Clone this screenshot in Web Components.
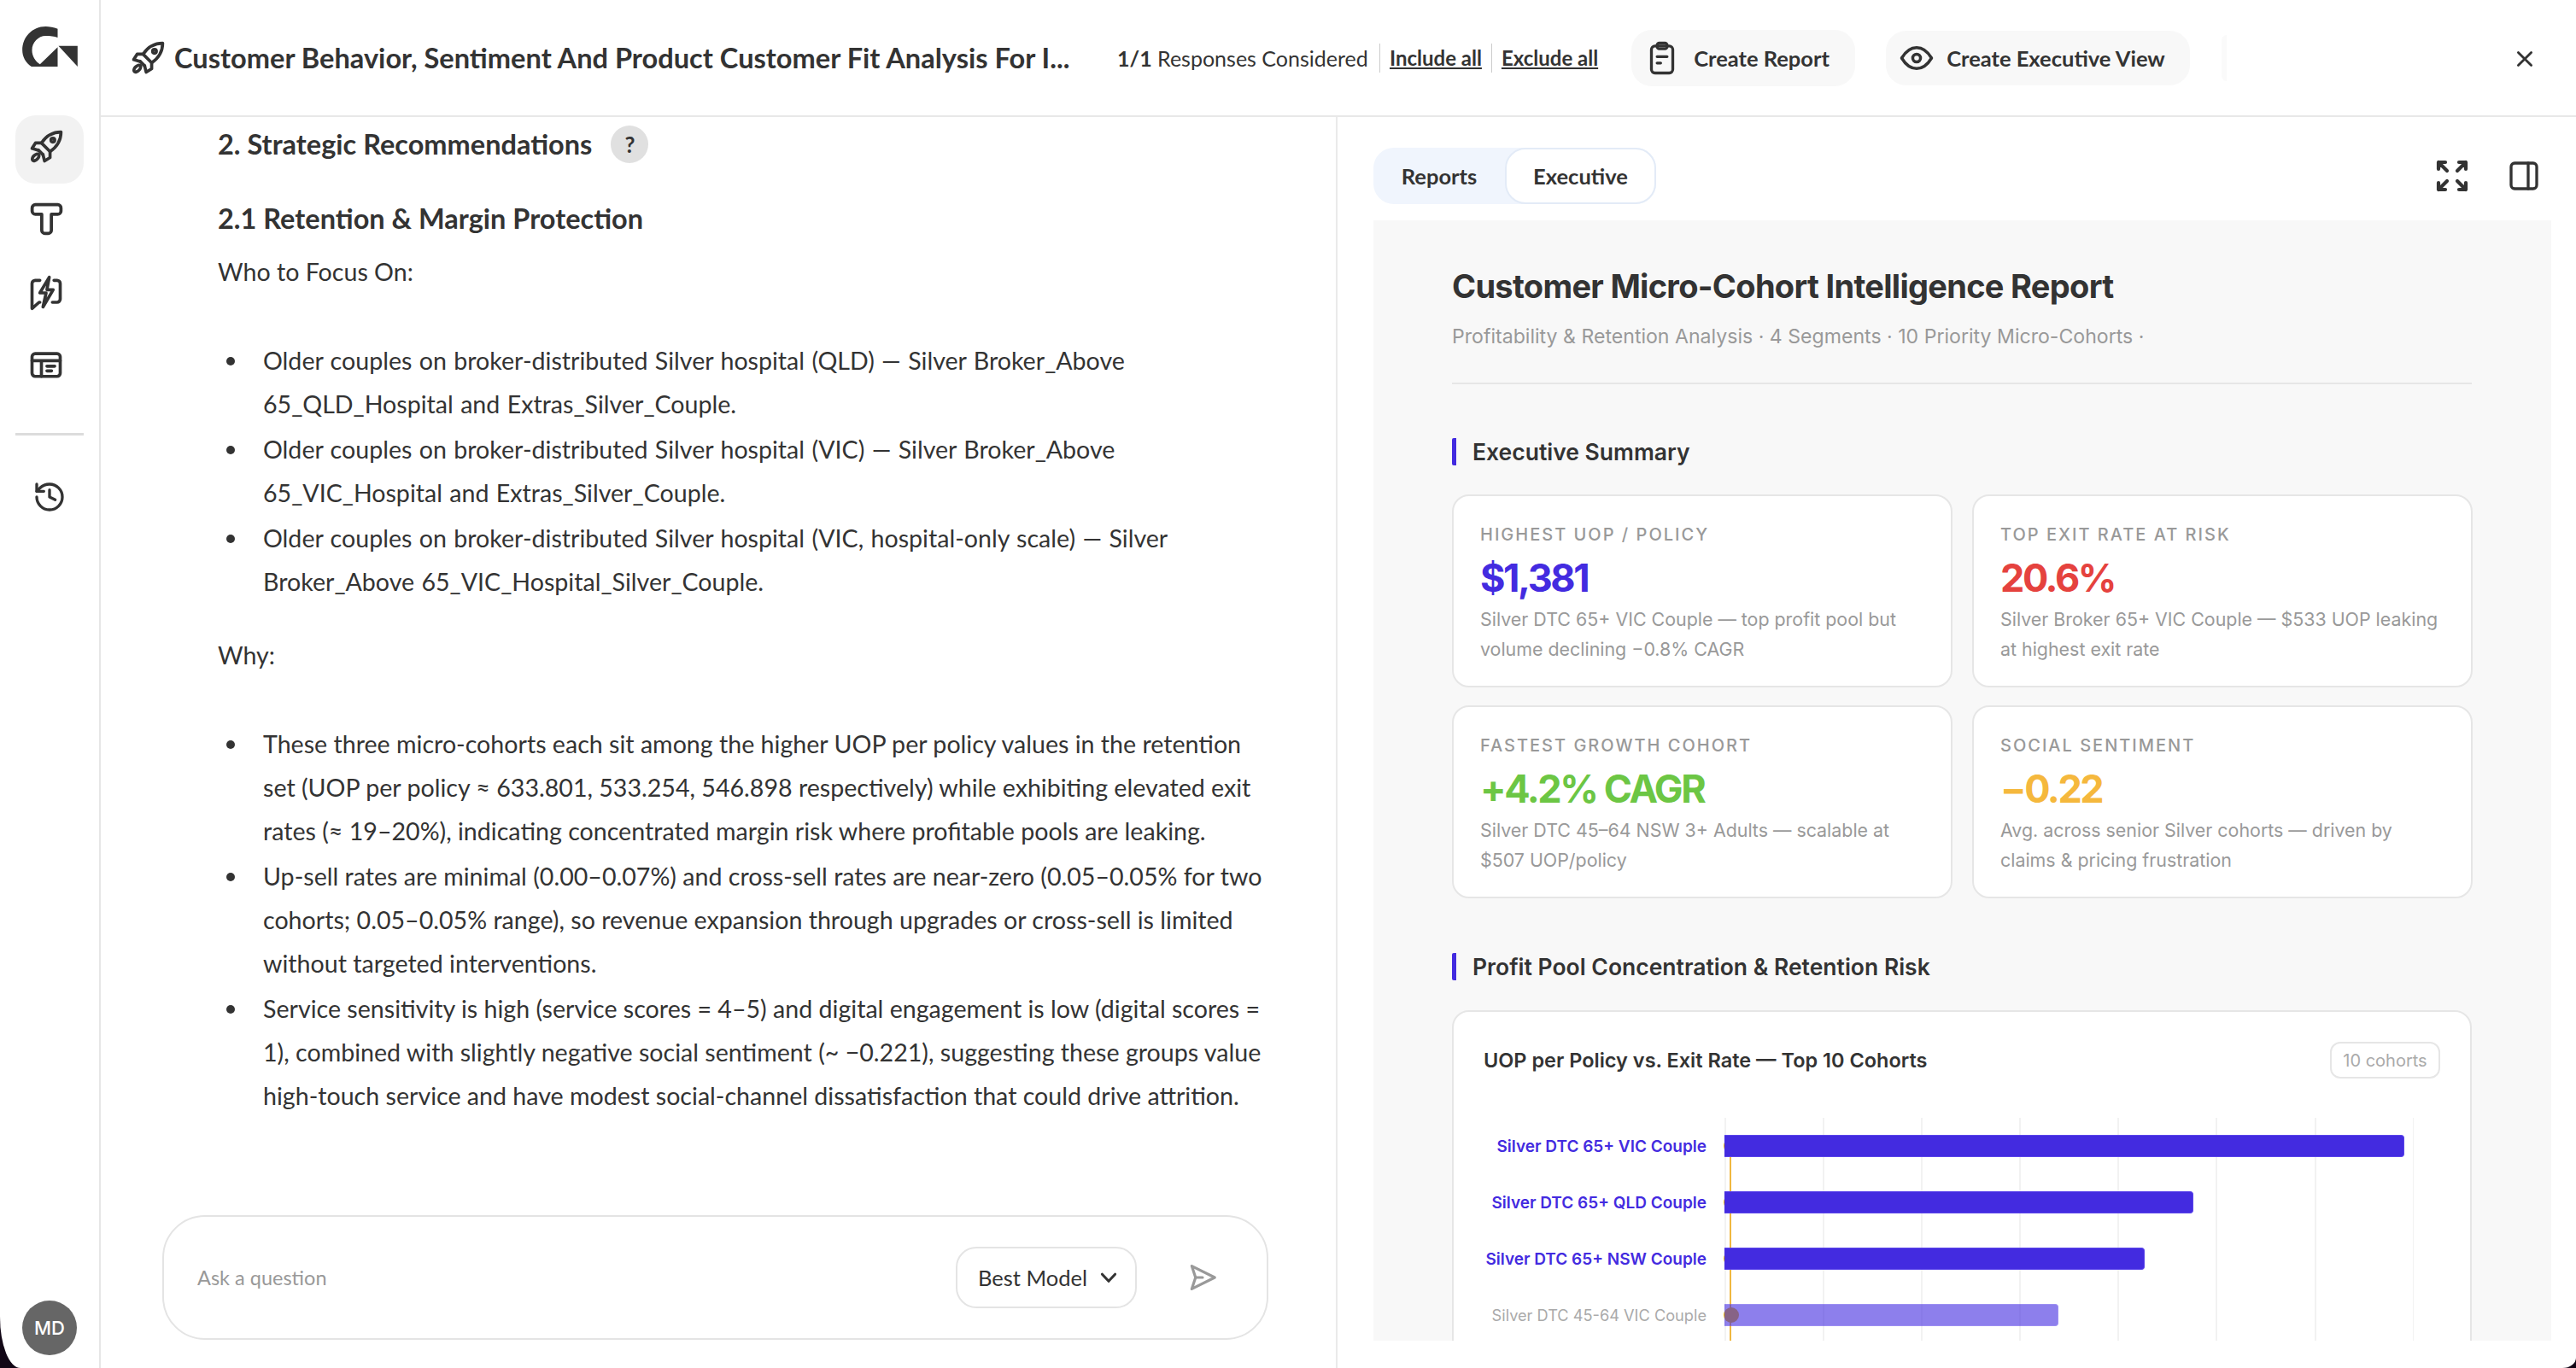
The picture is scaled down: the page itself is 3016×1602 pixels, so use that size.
<!DOCTYPE html>
<html>
<head>
<meta charset="utf-8">
<title>Customer Micro-Cohort Intelligence Report</title>
<style>
  html { background: #120716; }
  body { margin: 0; width: 3016px; height: 1602px; overflow: hidden; font-family: "Lato", "Liberation Sans", sans-serif; color: #333; }
</style>
</head>
<body>
<app-shell>
  <side-rail slot="rail"></side-rail>
  <top-bar slot="top" heading="Customer Behavior, Sentiment And Product Customer Fit Analysis For I..."></top-bar>
  <answer-pane slot="left"></answer-pane>
  <report-pane slot="right"></report-pane>
</app-shell>

<script>
const ICONS = {
  rocket: '<path d="M21.5 2.5C16 2.5 12 5 9 9.5l5.5 5.5c4.5-3 7-7 7-12.500z"/><path d="M9 9.500H5.200L3 13l4 1.200"/><path d="M14.500 15v3.800L11 21l-1-4"/><path d="M7 14l3 3"/><circle cx="16.300" cy="7.700" r="1.200"/><ellipse cx="5.300" cy="18.700" rx="2.700" ry="1.500" transform="rotate(-45 5.300 18.700)"/>',
  type: '<path d="M5 3h14a2 2 0 0 1 2 2v2a2 2 0 0 1-2 2h-4v10a2 2 0 0 1-2 2h-2a2 2 0 0 1-2-2V9H5a2 2 0 0 1-2-2V5a2 2 0 0 1 2-2z"/>',
  bolt: '<path d="M8 4H5a2 2 0 0 0-2 2v16l4.500-4H8"/><path d="M17 4h2a2 2 0 0 1 2 2v10a2 2 0 0 1-2 2h-3"/><path d="M14 2L8 12h4l-2 9 6.500-11H12.500z"/>',
  table: '<rect x="3" y="5" width="18" height="14.500" rx="2"/><path d="M3 9.500h18M9 9.500v10M12.500 13h5M12.500 16h3"/>',
  history: '<path d="M3 12a9 9 0 1 0 9-9 9.750 9.750 0 0 0-6.740 2.740L3 8"/><path d="M3 3v5h5"/><path d="M12 7v5l4 2"/>',
  clipboard: '<rect x="4.500" y="3.500" width="15" height="19" rx="2.500"/><rect x="8.500" y="1.500" width="7" height="4" rx="1.500"/><path d="M8.500 11h7M8.500 15.500h2.500"/>',
  eye: '<path d="M2 12C5 7 8 5 12 5s7 2 10 7c-3 5-6 7-10 7s-7-2-10-7z"/><circle cx="12" cy="12" r="2.600"/>',
  close: '<path d="M5 5l14 14M19 5L5 19"/>',
  expand: '<path d="M4 8V4h4M4 4l5 5M20 8V4h-4M20 4l-5 5M4 16v4h4M4 20l5-5M20 16v4h-4M20 20l-5-5"/>',
  panel: '<rect x="3" y="3" width="18" height="18" rx="2.500"/><path d="M15 3v18"/>',
  send: '<path d="M4 3.500L21 12 4 20.500 6.800 12z"/><path d="M6.800 12H12"/>',
  chevron: '<path d="M5 8.500l7 7.500 7-7.500"/>'
};

class UiIcon extends HTMLElement {
  connectedCallback() {
    const s = this.getAttribute('size') || 32;
    const w = this.getAttribute('stroke') || 2;
    this.attachShadow({ mode: 'open' }).innerHTML = `
      <style>:host { display: inline-flex; width: ${s}px; height: ${s}px; flex: none; } svg { width: 100%; height: 100%; }</style>
      <svg viewBox="0 0 24 24" fill="none" stroke="currentColor" stroke-width="${w}" stroke-linecap="round" stroke-linejoin="round">${ICONS[this.getAttribute('name')]}</svg>`;
  }
}
customElements.define('ui-icon', UiIcon);

class AppShell extends HTMLElement {
  constructor() {
    super();
    this.attachShadow({ mode: 'open' }).innerHTML = `
      <style>
        :host { display: grid; width: 3016px; height: 1602px; grid-template-columns: 118px 1448px 1450px; grid-template-rows: 137px 1465px;
          background: #fff; border-bottom-left-radius: 24px 60px; border-bottom-right-radius: 16px 12px; overflow: hidden; }
        ::slotted([slot=rail]) { grid-row: 1 / 3; }
        ::slotted([slot=top]) { grid-column: 2 / 4; }
      </style>
      <slot name="rail"></slot><slot name="top"></slot><slot name="left"></slot><slot name="right"></slot>`;
  }
}
customElements.define('app-shell', AppShell);

class SideRail extends HTMLElement {
  constructor() {
    super();
    this.attachShadow({ mode: 'open' }).innerHTML = `
      <style>
        :host { display: flex; flex-direction: column; align-items: center; border-right: 2px solid #e6e6e6; box-sizing: border-box; height: 1602px; position: relative; color: #333; }
        .logo { width: 65px; height: 47px; margin: 31px 0 57px; }
        .btn { width: 80px; height: 80px; border-radius: 24px; display: flex; align-items: center; justify-content: center; margin-bottom: 4px; }
        .btn.on { background: #f2f2f2; }
        .btn ui-icon { margin-right: 8px; }
        .btn.on ui-icon { margin-bottom: 6px; }
        .btn.type ui-icon { margin-bottom: 5px; }
        .btn.hist ui-icon { margin-right: 0; }
        hr { width: 80px; border: 0; border-top: 3px solid #dcdcdc; margin: 36px 0 32px; }
        .avatar { margin-top: auto; margin-bottom: 15px; width: 64px; height: 64px; border-radius: 50%; background: #666; color: #fff; font: 500 22px "Inter", sans-serif; display: flex; align-items: center; justify-content: center; }
      </style>
      <svg class="logo" viewBox="78 92 194 141" fill="#333"><path d="M202 100C188 95 172 92 160 92 112 92 78 130 78 175 78 198 90 220 110 233H202V165L140 225C122 212 112 195 112 175 112 148 134 125 160 125 176 125 190 127 202 131Z"/><path d="M205 160H272V233Z"/></svg>
      <div class="btn on"><ui-icon name="rocket" size="44"></ui-icon></div>
      <div class="btn type"><ui-icon name="type" size="45"></ui-icon></div>
      <div class="btn"><ui-icon name="bolt" size="44"></ui-icon></div>
      <div class="btn"><ui-icon name="table" size="44"></ui-icon></div>
      <hr>
      <div class="btn hist"><ui-icon name="history" size="40"></ui-icon></div>
      <div class="avatar">MD</div>`;
  }
}
customElements.define('side-rail', SideRail);

class PillButton extends HTMLElement {
  constructor() {
    super();
    this.attachShadow({ mode: 'open' }).innerHTML = `
      <style>
        :host { display: inline-flex; align-items: center; height: 66px; box-sizing: border-box; background: #f8f8f8; border-radius: 24px; font: 700 25.5px "Lato", sans-serif; color: #333; flex: none; }
      </style><slot></slot>`;
  }
}
customElements.define('pill-button', PillButton);

class TopBar extends HTMLElement {
  connectedCallback() {
    this.attachShadow({ mode: 'open' }).innerHTML = `
      <style>
        :host { display: flex; align-items: center; height: 137px; box-sizing: border-box; border-bottom: 2px solid #e8e8e8; color: #333; position: relative; }
        .rocket { margin-left: 33px; margin-right: 9px; }
        h1 { margin: 0; font: 700 32.6px "Lato", sans-serif; white-space: nowrap; width: 1050px; }
        .count { margin-left: 54px; font-size: 25px; white-space: nowrap; width: 294px; }
        .count b { font-weight: 700; }
        a { font-size: 24px; font-weight: 700; text-decoration: underline; color: #333; white-space: nowrap; }
        .sep { width: 1px; height: 34px; background: #ccc; margin: 0 11px; }
        .sep.first { margin-left: 13px; }
        .report { margin-left: 39px; width: 262px; padding-left: 16px; gap: 17px; }
        .exec { margin-left: 36px; width: 356px; padding-left: 15px; gap: 14px; height: 64px; }
        .ghost { margin-left: 37px; width: 6px; height: 54px; background: #fafafa; border-radius: 16px 0 0 16px; }
        .close { position: absolute; right: 47px; top: 56px; }
      </style>
      <ui-icon class="rocket" name="rocket" size="44"></ui-icon>
      <h1>${this.getAttribute('heading')}</h1>
      <span class="count"><b>1/1</b> Responses Considered</span>
      <span class="sep first"></span><a>Include all</a><span class="sep"></span><a>Exclude all</a>
      <pill-button class="report"><ui-icon name="clipboard" size="40"></ui-icon>Create Report</pill-button>
      <pill-button class="exec"><ui-icon name="eye" size="42"></ui-icon>Create Executive View</pill-button>
      <span class="ghost"></span>
      <ui-icon class="close" name="close" size="26" stroke="2.600"></ui-icon>`;
  }
}
customElements.define('top-bar', TopBar);

class AskBox extends HTMLElement {
  constructor() {
    super();
    this.attachShadow({ mode: 'open' }).innerHTML = `
      <style>
        :host { display: flex; align-items: center; width: 1295px; height: 146px; box-sizing: border-box; border: 2px solid #e4e4e4; border-radius: 50px; padding: 0 34px 0 39px; margin: 0 0 33px 72px; }
        .q { flex: 1; font-size: 23.5px; color: #999; }
        .model { display: flex; align-items: center; gap: 12px; width: 212px; height: 72px; box-sizing: border-box; border: 2px solid #e4e4e4; border-radius: 24px; padding-left: 24px; font-size: 25.5px; color: #333; }
        .send { margin-left: 58px; margin-right: 22px; color: #999; }
      </style>
      <span class="q">Ask a question</span>
      <span class="model">Best Model <ui-icon name="chevron" size="26" stroke="2.800"></ui-icon></span>
      <ui-icon class="send" name="send" size="38"></ui-icon>`;
  }
}
customElements.define('ask-box', AskBox);

class AnswerPane extends HTMLElement {
  constructor() {
    super();
    this.attachShadow({ mode: 'open' }).innerHTML = `
      <style>
        :host { display: flex; flex-direction: column; height: 1465px; border-right: 2px solid #eaeaea; box-sizing: border-box; color: #333; }
        .scroll { flex: 1; overflow: hidden; padding: 10px 0 0 137px; width: 1230px; font-size: 28.6px; line-height: 51px; }
        h2, h3 { margin: 0; font-size: 32.5px; line-height: 44px; font-weight: 700; }
        h2 { display: flex; align-items: center; gap: 22px; }
        h3 { margin-top: 43px; }
        .help { width: 44px; height: 44px; border-radius: 50%; background: #e0e0e0; font-size: 26px; display: flex; align-items: center; justify-content: center; }
        p { margin: 15px 0 53px; }
        ul { margin: 0 0 35px; padding: 0 0 0 53px; list-style: none; }
        ul.who { word-spacing: 1px; }
        li { margin-bottom: 2px; position: relative; }
        li::before { content: ""; position: absolute; left: -43px; top: 21px; width: 10px; height: 10px; border-radius: 50%; background: #333; }
        p.why { margin-top: 35px; margin-bottom: 53px; }
      </style>
      <div class="scroll">
        <h2>2. Strategic Recommendations <span class="help">?</span></h2>
        <h3>2.1 Retention &amp; Margin Protection</h3>
        <p>Who to Focus On:</p>
        <ul class="who">
          <li>Older couples on broker-distributed Silver hospital (QLD) — Silver Broker_Above 65_QLD_Hospital and Extras_Silver_Couple.</li>
          <li>Older couples on broker-distributed Silver hospital (VIC) — Silver Broker_Above 65_VIC_Hospital and Extras_Silver_Couple.</li>
          <li>Older couples on broker-distributed Silver hospital (VIC, hospital-only scale) — Silver Broker_Above 65_VIC_Hospital_Silver_Couple.</li>
        </ul>
        <p class="why">Why:</p>
        <ul>
          <li>These three micro-cohorts each sit among the higher UOP per policy values in the retention set (UOP per policy ≈ 633.801, 533.254, 546.898 respectively) while exhibiting elevated exit rates (≈ 19–20%), indicating concentrated margin risk where profitable pools are leaking.</li>
          <li>Up-sell rates are minimal (0.00–0.07%) and cross-sell rates are near-zero (0.05–0.05% for two cohorts; 0.05–0.05% range), so revenue expansion through upgrades or cross-sell is limited without targeted interventions.</li>
          <li>Service sensitivity is high (service scores = 4–5) and digital engagement is low (digital scores = 1), combined with slightly negative social sentiment (~ −0.221), suggesting these groups value high-touch service and have modest social-channel dissatisfaction that could drive attrition.</li>
        </ul>
      </div>
      <ask-box></ask-box>`;
  }
}
customElements.define('answer-pane', AnswerPane);

class SectionTitle extends HTMLElement {
  constructor() {
    super();
    this.attachShadow({ mode: 'open' }).innerHTML = `
      <style>
        :host { display: block; font: 600 26.5px/32px "Inter", sans-serif; color: #333; border-left: 5px solid #432be0; border-radius: 2px; padding-left: 19px; }
      </style><slot></slot>`;
  }
}
customElements.define('section-title', SectionTitle);

class StatCard extends HTMLElement {
  connectedCallback() {
    this.attachShadow({ mode: 'open' }).innerHTML = `
      <style>
        :host { display: block; box-sizing: border-box; height: 226px; background: #fff; border: 2px solid #e6e6e6; border-radius: 20px; padding: 33px 30px 0 31px; font-family: "Inter", sans-serif; }
        .label { font-size: 20px; line-height: 24px; font-weight: 500; letter-spacing: 2px; color: #999; }
        .value { font-size: 45px; line-height: 52px; font-weight: 700; letter-spacing: -2.400px; margin: 13px 0 5px; color: ${this.getAttribute('color')}; }
        .desc { font-size: 21.4px; line-height: 35px; color: #999; }
      </style>
      <div class="label">${this.getAttribute('label')}</div>
      <div class="value">${this.getAttribute('value')}</div>
      <div class="desc"><slot></slot></div>`;
  }
}
customElements.define('stat-card', StatCard);

class CohortChart extends HTMLElement {
  constructor() {
    super();
    const rows = [
      ['Silver DTC 65+ VIC Couple', 98.6, 1],
      ['Silver DTC 65+ QLD Couple', 68, 1],
      ['Silver DTC 65+ NSW Couple', 61, 1],
      ['Silver DTC 45-64 VIC Couple', 48.4, 0]
    ];
    this.attachShadow({ mode: 'open' }).innerHTML = `
      <style>
        :host { display: block; box-sizing: border-box; background: #fff; border: 2px solid #e6e6e6; border-radius: 20px; padding: 35px 35px 0; height: 500px; font-family: "Inter", sans-serif; }
        .head { display: flex; align-items: center; justify-content: space-between; height: 43px; }
        h4 { margin: 0; font-size: 23.5px; font-weight: 600; color: #333; }
        .tag { width: 129px; height: 43px; box-sizing: border-box; border: 2px solid #e6e6e6; border-radius: 12px; font-size: 20px; color: #aaa; display: flex; align-items: center; justify-content: center; }
        .plot { display: grid; grid-template-columns: 261px 807px; column-gap: 21px; margin-top: 46px; }
        .labels div { height: 66px; display: flex; align-items: center; justify-content: flex-end; font-size: 19px; font-weight: 600; color: #432be0; white-space: nowrap; }
        .labels div.dim { color: #aaa; font-weight: 400; font-size: 18.2px; }
        .track { position: relative; background: repeating-linear-gradient(to right, #f2f2f2 0 2px, transparent 2px 115.1px); }
        .row { height: 66px; display: flex; align-items: center; position: relative; z-index: 1; }
        .bar { height: 26px; box-sizing: border-box; background: #432be0; border: 1px solid #5b45ea; border-left: 0; border-radius: 0 4px 4px 0; }
        .bar.dim { opacity: .6; }
        .line { position: absolute; left: 6px; top: 33px; width: 2px; height: 400px; background: #f0b840; }
        .dot { position: absolute; left: -1px; width: 18px; height: 18px; border-radius: 50%; background: #f0b800; }
      </style>
      <div class="head"><h4>UOP per Policy vs. Exit Rate — Top 10 Cohorts</h4><span class="tag">10 cohorts</span></div>
      <div class="plot">
        <div class="labels">${rows.map(r => `<div class="${r[2] ? '' : 'dim'}">${r[0]}</div>`).join('')}</div>
        <div class="track">
          <span class="line"></span>
          ${rows.map((r, i) => `<span class="dot" style="top:${24 + i * 66}px"></span>`).join('')}
          ${rows.map(r => `<div class="row"><div class="bar ${r[2] ? '' : 'dim'}" style="width:${r[1]}%"></div></div>`).join('')}
        </div>
      </div>`;
  }
}
customElements.define('cohort-chart', CohortChart);

class ReportPane extends HTMLElement {
  constructor() {
    super();
    this.attachShadow({ mode: 'open' }).innerHTML = `
      <style>
        :host { display: block; height: 1465px; box-sizing: border-box; padding: 36px 29px 32px 42px; color: #333; position: relative; }
        .tools { display: flex; align-items: center; justify-content: space-between; height: 66px; margin-bottom: 19px; }
        .tabs { display: flex; height: 66px; width: 331px; background: #f0f5fd; border-radius: 24px; font: 700 25.5px "Lato", sans-serif; }
        .tabs span { display: flex; align-items: center; justify-content: center; }
        .tabs .a { width: 154px; }
        .tabs .b { flex: 1; background: #fff; border: 2px solid #e3ebf7; border-radius: 24px; box-sizing: border-box; }
        .icons { display: flex; align-items: center; gap: 40px; margin-right: 12px; }
        .sheet { background: #f8f8f8; height: 1312px; box-sizing: border-box; overflow: hidden; padding: 53px 93px 0 92px; font-family: "Inter", sans-serif; }
        h2 { margin: 0; font-size: 38px; line-height: 48px; font-weight: 700; letter-spacing: -.7px; }
        .sub { margin-top: 19px; padding-bottom: 38px; font-size: 23.1px; line-height: 32px; color: #999; border-bottom: 2px solid #e6e6e6; }
        section-title.one { margin-top: 63px; }
        section-title.two { margin-top: 64px; }
        .grid { display: grid; grid-template-columns: 586px 586px; column-gap: 23px; row-gap: 21px; margin-top: 34px; }
        cohort-chart { margin-top: 35px; }
      </style>
      <div class="tools">
        <div class="tabs"><span class="a">Reports</span><span class="b">Executive</span></div>
        <div class="icons"><ui-icon name="expand" size="48" stroke="2.100"></ui-icon><ui-icon name="panel" size="40"></ui-icon></div>
      </div>
      <div class="sheet">
        <h2>Customer Micro-Cohort Intelligence Report</h2>
        <div class="sub">Profitability &amp; Retention Analysis · 4 Segments · 10 Priority Micro-Cohorts ·</div>
        <section-title class="one">Executive Summary</section-title>
        <div class="grid">
          <stat-card label="HIGHEST UOP / POLICY" value="$1,381" color="#432be0">Silver DTC 65+ VIC Couple — top profit pool but volume declining −0.8% CAGR</stat-card>
          <stat-card label="TOP EXIT RATE AT RISK" value="20.6%" color="#e5423e">Silver Broker 65+ VIC Couple — $533 UOP leaking at highest exit rate</stat-card>
          <stat-card label="FASTEST GROWTH COHORT" value="+4.2% CAGR" color="#6cc644">Silver DTC 45–64 NSW 3+ Adults — scalable at $507 UOP/policy</stat-card>
          <stat-card label="SOCIAL SENTIMENT" value="−0.22" color="#f5b83d">Avg. across senior Silver cohorts — driven by claims &amp; pricing frustration</stat-card>
        </div>
        <section-title class="two">Profit Pool Concentration &amp; Retention Risk</section-title>
        <cohort-chart></cohort-chart>
      </div>`;
  }
}
customElements.define('report-pane', ReportPane);
</script>
</body>
</html>
